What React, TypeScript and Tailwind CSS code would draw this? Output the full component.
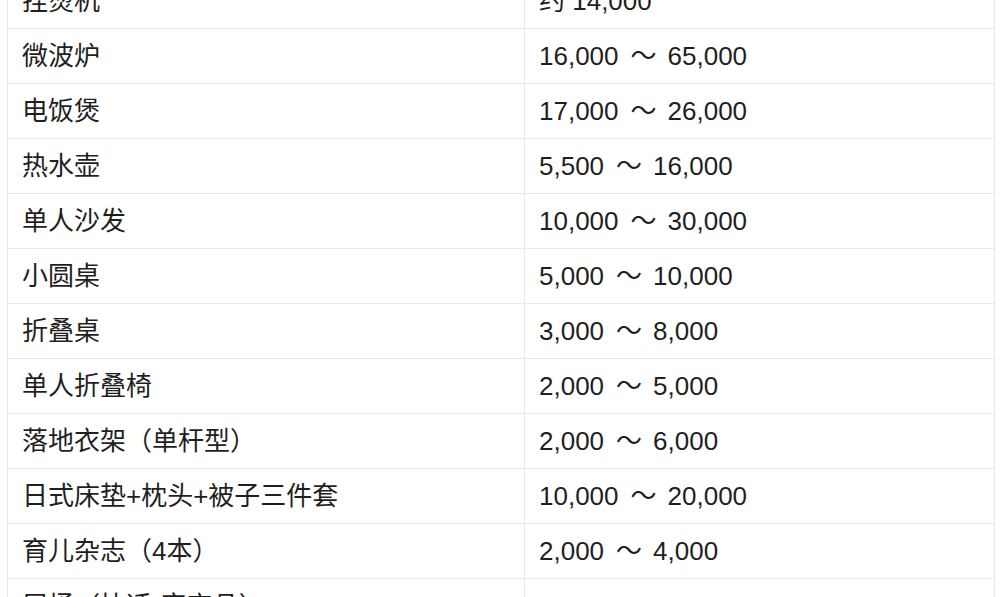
const rows: [string, string][] = [
  ["挂烫机", "约 14,000"],
  ["微波炉", "16,000 ～ 65,000"],
  ["电饭煲", "17,000 ～ 26,000"],
  ["热水壶", "5,500 ～ 16,000"],
  ["单人沙发", "10,000 ～ 30,000"],
  ["小圆桌", "5,000 ～ 10,000"],
  ["折叠桌", "3,000 ～ 8,000"],
  ["单人折叠椅", "2,000 ～ 5,000"],
  ["落地衣架（单杆型）", "2,000 ～ 6,000"],
  ["日式床垫+枕头+被子三件套", "10,000 ～ 20,000"],
  ["育儿杂志（4本）", "2,000 ～ 4,000"],
  ["尿桶（快适·审定品）", "3,000 ～ 8,000"],
];

// price range gets a bit more air around the tilde
function Price({ value }: { value: string }) {
  const parts = value.split(" ～ ");
  if (parts.length < 2) return <>{value}</>;
  return (
    <>
      {parts[0]}
      <span className="ml-[12px] mr-[11px]">～</span>
      {parts[1]}
    </>
  );
}

export default function App() {
  return (
    <div className="h-[597px] w-[1000px] overflow-hidden bg-white">
      <div
        className="-mt-[26px] ml-[7px] w-[988px] border-x border-[#e8e8e8] text-[26px] text-[#1f1f1f]"
        style={{ fontFamily: '"Liberation Sans", "Noto Sans CJK SC", sans-serif' }}
      >
        {rows.map(([name, price]) => (
          <div
            key={name}
            className="grid h-[55px] grid-cols-[517px_1fr] border-b border-[#e8e8e8]"
          >
            <div className="flex items-center border-r border-[#e8e8e8] pl-[14px]">
              {name}
            </div>
            <div className="flex items-center pl-[14px]">
              <Price value={price} />
            </div>
          </div>
        ))}
      </div>
    </div>
  );
}
